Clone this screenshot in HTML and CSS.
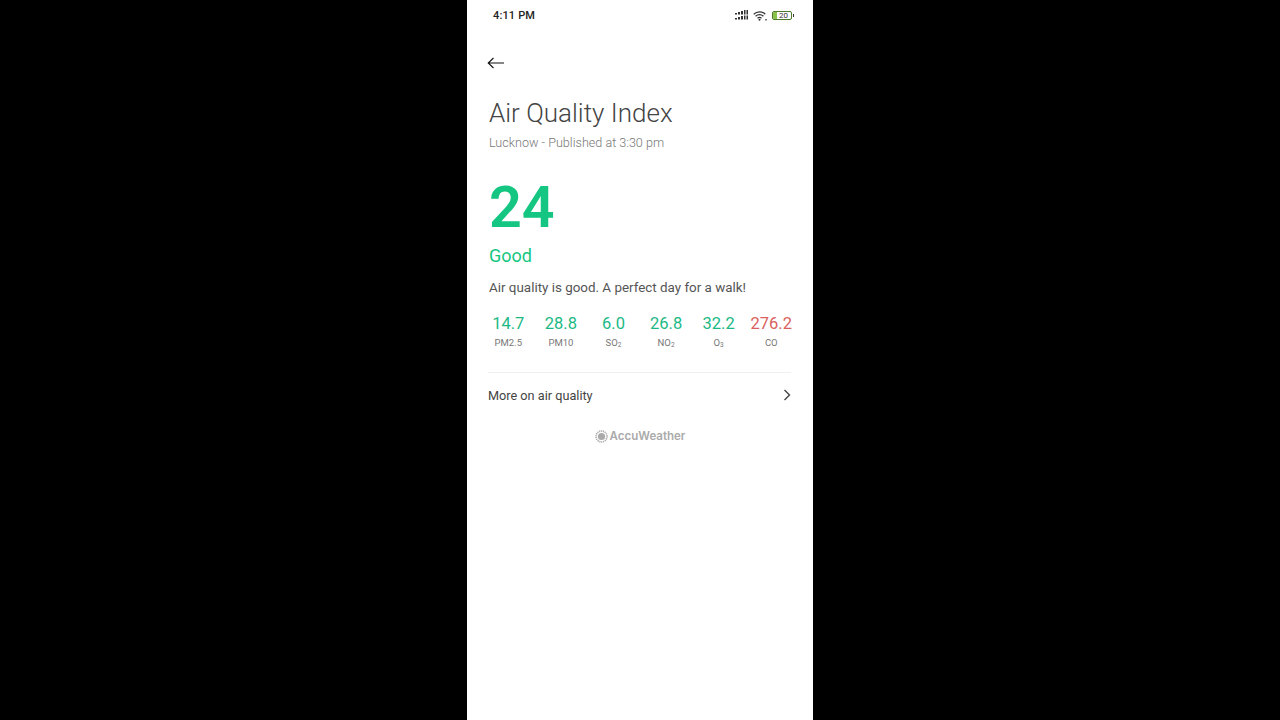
FILE: index.html
```html
<!DOCTYPE html>
<html>
<head>
  <title>Air Quality Index</title>
  <meta charset="UTF-8">
  <link rel="stylesheet" href="styles.css">
</head>
<body>
  <div class="phone">
    <div class="status-bar">
      <span class="clock">4:11 PM</span>
      <div class="status-icons">
        <svg class="signal" width="14" height="10" viewBox="0 0 14 10">
          <path d="M0 3h2v1.500H0zM3 2h2v2.500H3zM6 1h2v3.500H6zM9 0h1.500v4.500H9zM11.500 0H13v4.500h-1.500zM0 8h2v1.500H0zM3 7h2v2.500H3zM6 6h2v3.500H6zM9 5.500h1.500v4H9zM11.500 5.500H13v4h-1.500z" fill="#333"/>
        </svg>
        <svg class="wifi" width="15" height="11" viewBox="0 0 15 11">
          <path d="M.7 4.200a8.300 8.300 0 0 1 11.600 0M2.600 6.200a5.600 5.600 0 0 1 7.800 0M4.500 8.200a3 3 0 0 1 4 0" fill="none" stroke="#333" stroke-width="1.200"/>
          <circle cx="6.500" cy="9.800" r="1" fill="#333"/>
          <path d="M12 9h2v1.500h-2z" fill="#777"/>
        </svg>
        <div class="battery">
          <div class="battery-body"><span class="battery-level"></span><span class="battery-text">20</span></div>
          <span class="battery-tip"></span>
        </div>
      </div>
    </div>

    <button class="back">
      <svg width="18" height="12" viewBox="0 0 18 12">
        <path d="M17 6H1.200M6.500 1 1.200 6l5.300 5" fill="none" stroke="#111" stroke-width="1.100"/>
      </svg>
    </button>

    <div class="header">
      <h1 class="title">Air Quality Index</h1>
      <p class="subtitle">Lucknow - Published at 3:30 pm</p>
    </div>

    <div class="aqi">24</div>
    <div class="aqi-label">Good</div>
    <p class="summary">Air quality is good. A perfect day for a walk!</p>

    <div class="metrics">
      <div class="metric"><div class="metric-value">14.7</div><div class="metric-name">PM2.5</div></div>
      <div class="metric"><div class="metric-value">28.8</div><div class="metric-name">PM10</div></div>
      <div class="metric"><div class="metric-value">6.0</div><div class="metric-name">SO<sub>2</sub></div></div>
      <div class="metric"><div class="metric-value">26.8</div><div class="metric-name">NO<sub>2</sub></div></div>
      <div class="metric"><div class="metric-value">32.2</div><div class="metric-name">O<sub>3</sub></div></div>
      <div class="metric"><div class="metric-value high">276.2</div><div class="metric-name">CO</div></div>
    </div>

    <a class="more" href="#">
      <span>More on air quality</span>
      <svg class="chevron" width="8" height="12" viewBox="0 0 8 12">
        <path d="M1.500 1 6.500 6l-5 5" fill="none" stroke="#444" stroke-width="1.400"/>
      </svg>
    </a>

    <div class="brand">
      <svg width="13" height="13" viewBox="0 0 13 13">
        <circle cx="6.500" cy="6.500" r="3.600" fill="#aaa"/>
        <circle cx="6.500" cy="6.500" r="5.500" fill="none" stroke="#aaa" stroke-width="1.600" stroke-dasharray="1.200 0.700"/>
      </svg>
      <span>AccuWeather</span>
    </div>
  </div>
</body>
</html>
```

FILE: styles.css
```css
body {
  font-family: Roboto, "Liberation Sans", sans-serif;
  margin: 0;
  height: 720px;
  overflow: hidden;
  background-color: #000000;
  display: flex;
  justify-content: center;
}
.phone {
  width: 346px;
  height: 720px;
  background-color: #ffffff;
  display: flex;
  flex-direction: column;
}
.status-bar {
  display: flex;
  align-items: center;
  justify-content: space-between;
  height: 30px;
  padding: 0 19px 0 26px;
}
.clock {
  font-size: 11px;
  font-weight: 500;
  color: #222222;
  letter-spacing: 0.15px;
}
.status-icons {
  display: flex;
  align-items: center;
  gap: 4px;
}
.battery {
  display: flex;
  align-items: center;
  gap: 1px;
}
.battery-body {
  position: relative;
  width: 18px;
  height: 7px;
  border: 1px solid #4f7a2c;
  border-radius: 2px;
  overflow: hidden;
}
.battery-level {
  display: block;
  width: 4px;
  height: 100%;
  background-color: #8bc34a;
}
.battery-text {
  position: absolute;
  top: -1px;
  left: 6px;
  font-size: 8px;
  line-height: 9px;
  color: #333333;
}
.battery-tip {
  width: 1px;
  height: 3px;
  background-color: #333333;
}
.back {
  align-self: flex-start;
  margin: 27px 0 0 20px;
  padding: 0;
  height: 12px;
  border: none;
  background: none;
  line-height: 0;
}
.header {
  margin: 29px 0 0 22px;
}
.title {
  margin: 0;
  font-size: 26px;
  font-weight: 300;
  line-height: 30px;
  color: #444444;
}
.subtitle {
  margin: 7px 0 0;
  font-size: 12.600px;
  font-weight: 300;
  line-height: 16px;
  color: #777777;
}
.aqi {
  margin: 26px 0 0 22px;
  font-size: 57.500px;
  font-weight: 600;
  line-height: 62px;
  color: #14c682;
}
.aqi-label {
  margin: 5px 0 0 22px;
  font-size: 18px;
  line-height: 24px;
  color: #14c682;
}
.summary {
  margin: 11px 0 0 22px;
  font-size: 13.400px;
  line-height: 18px;
  color: #555555;
}
.metrics {
  display: grid;
  grid-template-columns: repeat(6, 52.600px);
  margin: 17px 0 0 15px;
}
.metric {
  text-align: center;
}
.metric-value {
  font-size: 16.500px;
  line-height: 20px;
  color: #1cb985;
}
.metric-value.high {
  color: #d9605c;
}
.metric-name {
  margin-top: 2px;
  font-size: 9.500px;
  line-height: 14px;
  color: #777777;
}
.metric-name sub {
  font-size: 6.500px;
  line-height: 0;
  vertical-align: -1px;
}
.more {
  display: flex;
  align-items: center;
  justify-content: space-between;
  margin: 22px 22px 0 21px;
  padding-top: 14px;
  border-top: 1px solid #f0f0f0;
  font-size: 12.700px;
  line-height: 18px;
  color: #444444;
  text-decoration: none;
}
.chevron {
  margin-bottom: 2px;
}
.brand {
  display: flex;
  align-items: center;
  justify-content: center;
  gap: 2px;
  margin-top: 22px;
  font-family: Inter, "Liberation Sans", sans-serif;
  font-size: 11.500px;
  font-weight: 600;
  line-height: 18px;
  color: #aaaaaa;
}
```
